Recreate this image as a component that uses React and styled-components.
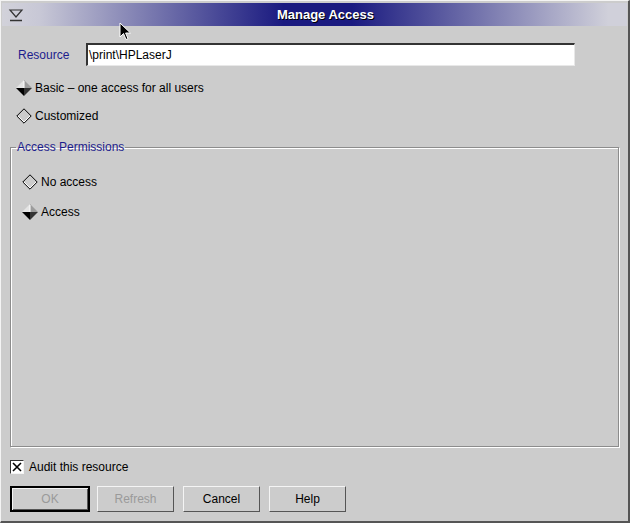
import React from 'react';
import styled, { createGlobalStyle } from 'styled-components';

const GlobalStyle = createGlobalStyle`
  html, body {
    margin: 0;
    padding: 0;
    background: #cccccc;
  }
  body {
    font-family: "Liberation Sans", Arial, sans-serif;
    font-size: 12px;
    color: #000;
  }
`;

const Window = styled.div`
  position: relative;
  width: 630px;
  height: 523px;
  box-sizing: border-box;
  background: #cccccc;
  border-top: 1px solid #f4f4f4;
  border-left: 1px solid #f4f4f4;
  border-right: 2px solid #555;
  border-bottom: 2px solid #555;
  padding: 2px 1px 0 1px;
  display: flex;
  flex-direction: column;
`;

const TitleBar = styled.div`
  height: 23px;
  display: flex;
  align-items: center;
  background: linear-gradient(
    to right,
    #d2d2da 0%,
    #c8c8d6 6%,
    #1a1a80 45%,
    #1a1a80 56%,
    #d0d0da 97%
  );
`;

const MenuButton = styled.div`
  width: 16px;
  height: 16px;
  margin-left: 6px;
  display: flex;
`;

const Title = styled.div`
  flex: 1;
  text-align: center;
  color: #fff;
  font-weight: bold;
  font-size: 13px;
  text-shadow: 1px 1px 0 #000;
`;

const Body = styled.div`
  flex: 1;
  display: flex;
  flex-direction: column;
  padding: 0 8px 0 8px;
`;

const ResourceRow = styled.div`
  display: flex;
  align-items: center;
  margin-top: 17px;
`;

const Label = styled.span`
  color: #1c1c8c;
  width: 76px;
  padding-left: 8px;
  box-sizing: border-box;
`;

const TextInput = styled.div`
  width: 489px;
  height: 23px;
  box-sizing: border-box;
  background: #fff;
  border-top: 2px solid #333;
  border-left: 2px solid #333;
  border-right: 1px solid #e8e8e8;
  border-bottom: 1px solid #e8e8e8;
  display: flex;
  align-items: center;
  padding-left: 1px;
`;

const RadioRow = styled.div`
  display: flex;
  align-items: center;
  gap: 3px;
  height: 20px;
  margin-top: ${(p) => p.$top}px;
  margin-left: ${(p) => p.$indent || 0}px;
`;

const GroupBox = styled.fieldset`
  margin: 14px 0 0 0;
  padding: 0;
  width: 609px;
  height: 307px;
  box-sizing: border-box;
  border: 1px solid #8c8c8c;
  box-shadow: inset 1px 1px 0 #fff, 1px 1px 0 #fff;
`;

const GroupContent = styled.div`
  display: flex;
  flex-direction: column;
  padding: 12px 0 0 11px;
`;

const Legend = styled.legend`
  color: #1c1c8c;
  padding: 0 1px;
  margin-left: 5px;
  line-height: 14px;
`;

const CheckRow = styled.div`
  display: flex;
  align-items: center;
  gap: 5px;
  margin-top: 13px;
`;

const CheckBox = styled.div`
  width: 14px;
  height: 14px;
  box-sizing: border-box;
  background: #fff;
  border-top: 1px solid #333;
  border-left: 1px solid #333;
  border-right: 1px solid #f4f4f4;
  border-bottom: 1px solid #f4f4f4;
  display: flex;
  align-items: center;
  justify-content: center;
`;

const ButtonRow = styled.div`
  display: flex;
  align-items: center;
  gap: 9px;
  margin-top: 12px;
`;

const Button = styled.button`
  font-family: inherit;
  font-size: 12px;
  width: 77px;
  height: 26px;
  box-sizing: border-box;
  background: #cccccc;
  color: ${(p) => (p.disabled ? '#9a9a9a' : '#000')};
  border-top: 1px solid #f4f4f4;
  border-left: 1px solid #f4f4f4;
  border-right: 1px solid #555;
  border-bottom: 1px solid #555;
  padding: 0;
  ${(p) =>
    p.$default &&
    `
    width: 80px;
    margin-right: -2px;
    border: 2px solid #000;
    box-shadow: inset 1px 1px 0 #f4f4f4, inset -1px -1px 0 #555;
  `}
`;

const Cursor = styled.svg`
  position: absolute;
  left: 118px;
  top: 21px;
`;

const Diamond = ({ checked }) => (
  <svg width="16" height="16" viewBox="0 0 16 16">
    {checked ? (
      <>
        <polygon points="8,0 0,8 8,8" fill="#e4e4e4" />
        <polygon points="8,0 16,8 8,8" fill="#9c9c9c" />
        <polygon points="0,8 8,16 8,8" fill="#000" />
        <polygon points="16,8 8,16 8,8" fill="#333" />
        <line x1="8" y1="1" x2="8" y2="8" stroke="#fff" strokeWidth="1" />
      </>
    ) : (
      <>
        <polygon points="8,0.8 15.2,8 8,15.2 0.8,8" fill="none" stroke="#000" strokeWidth="1" />
        <polyline points="14,8 8,14 2,8" fill="none" stroke="#fff" strokeWidth="1" />
      </>
    )}
  </svg>
);

const Radio = ({ checked, label, top, indent }) => (
  <RadioRow $top={top} $indent={indent}>
    <Diamond checked={checked} />
    <span>{label}</span>
  </RadioRow>
);

export default function App() {
  return (
    <>
      <GlobalStyle />
      <Window>
        <TitleBar>
          <MenuButton>
            <svg width="16" height="16" viewBox="0 0 16 16">
              <polygon points="2,3 14,3 8,10" fill="none" stroke="#333" strokeWidth="1.2" />
              <line x1="2" y1="13.5" x2="14" y2="13.5" stroke="#333" strokeWidth="1.5" />
            </svg>
          </MenuButton>
          <Title>Manage Access</Title>
        </TitleBar>
        <Body>
          <ResourceRow>
            <Label>Resource</Label>
            <TextInput>\print\HPLaserJ</TextInput>
          </ResourceRow>
          <Radio checked label="Basic – one access for all users" top={12} indent={6} />
          <Radio label="Customized" top={8} indent={6} />
          <GroupBox>
            <Legend>Access Permissions</Legend>
            <GroupContent>
              <Radio label="No access" top={6} />
              <Radio checked label="Access" top={10} />
            </GroupContent>
          </GroupBox>
          <CheckRow>
            <CheckBox>
              <svg width="10" height="10" viewBox="0 0 10 10">
                <path d="M1 1 L9 9 M9 1 L1 9" stroke="#000" strokeWidth="1.6" />
              </svg>
            </CheckBox>
            <span>Audit this resource</span>
          </CheckRow>
          <ButtonRow>
            <Button $default disabled>OK</Button>
            <Button disabled>Refresh</Button>
            <Button>Cancel</Button>
            <Button>Help</Button>
          </ButtonRow>
        </Body>
        <Cursor width="13" height="20" viewBox="0 0 13 20">
          <path d="M1 1 L1 15 L4.5 11.5 L7 17.5 L9 16.7 L6.6 11 L11.5 11 Z" fill="#000" stroke="#fff" strokeWidth="1" />
        </Cursor>
      </Window>
    </>
  );
}
